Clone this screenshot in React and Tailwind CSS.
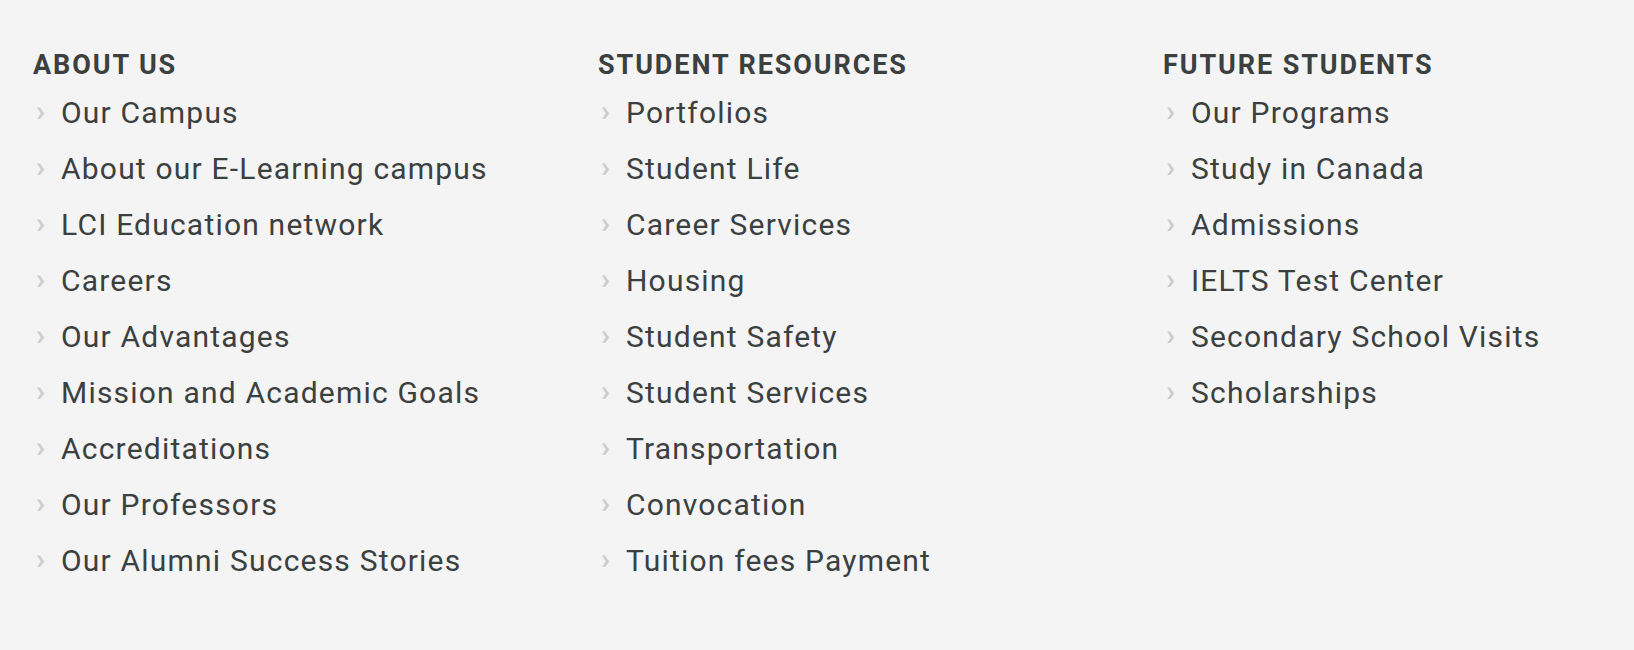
const columns = [
  {
    title: 'About us',
    links: [
      'Our Campus',
      'About our E-Learning campus',
      'LCI Education network',
      'Careers',
      'Our Advantages',
      'Mission and Academic Goals',
      'Accreditations',
      'Our Professors',
      'Our Alumni Success Stories',
    ],
  },
  {
    title: 'Student resources',
    links: [
      'Portfolios',
      'Student Life',
      'Career Services',
      'Housing',
      'Student Safety',
      'Student Services',
      'Transportation',
      'Convocation',
      'Tuition fees Payment',
    ],
  },
  {
    title: 'Future students',
    links: [
      'Our Programs',
      'Study in Canada',
      'Admissions',
      'IELTS Test Center',
      'Secondary School Visits',
      'Scholarships',
    ],
  },
]

export default function App() {
  return (
    <footer className="min-h-[650px] w-full overflow-hidden bg-[#f4f4f4] pl-[33px] pt-[49px] font-['Roboto',sans-serif] text-[#3b4040]">
      <div className="grid grid-cols-[565px_565px_1fr]">
        {columns.map((col) => (
          <div key={col.title}>
            <h3 className="h-[32px] text-[27px] font-bold uppercase leading-[32px] tracking-[1.9px]">{col.title}</h3>
            <ul className="mt-[4px]">
              {col.links.map((link) => (
                <li key={link} className="flex h-[56px] items-center">
                  <span className="w-[28px] shrink-0 pl-[3px] text-[30px] font-bold leading-none text-[#cdcdcd] -translate-y-[2px]">›</span>
                  <a href="#" className="text-[30px] leading-none tracking-[1.2px]">
                    {link}
                  </a>
                </li>
              ))}
            </ul>
          </div>
        ))}
      </div>
    </footer>
  )
}
